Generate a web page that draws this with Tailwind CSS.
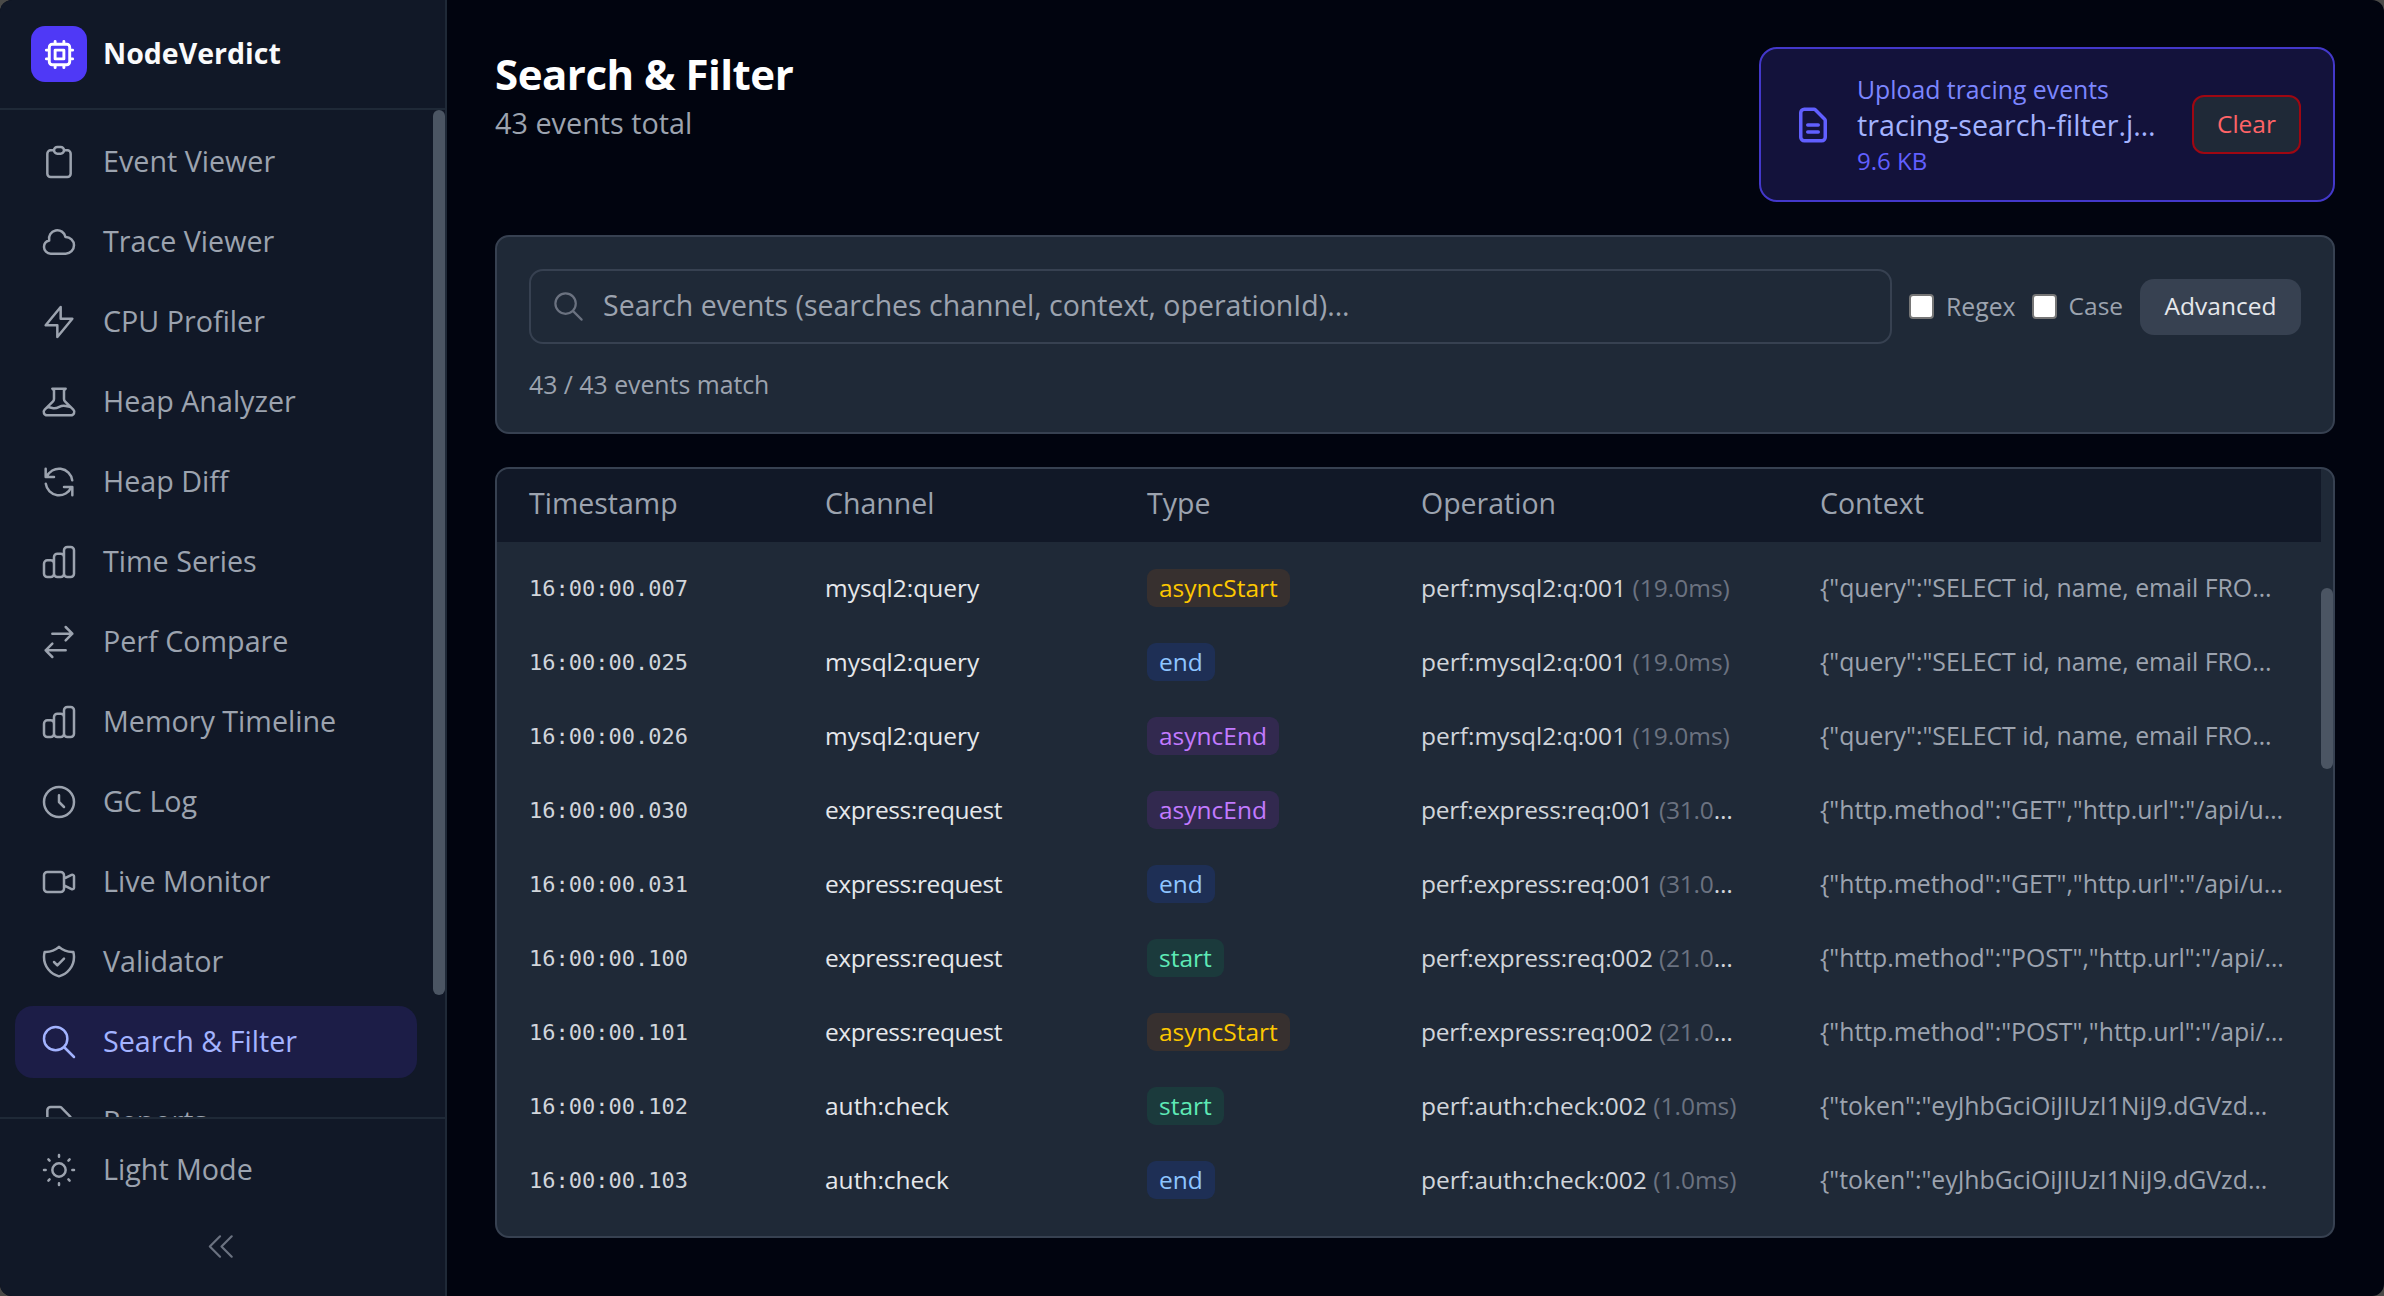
<!DOCTYPE html>
<html lang="en">
<head>
  <meta charset="UTF-8" />
  <meta name="viewport" content="width=device-width, initial-scale=1.0"/>
  <title>NodeVerdict - Search &amp; Filter</title>
  <script src="https://cdn.jsdelivr.net/npm/@tailwindcss/browser@4"></script>
</head>
<body class="bg-[#4a4a48] font-['Open_Sans',sans-serif] overflow-hidden">
  <div class="flex h-[1296px] w-[2384px] overflow-hidden rounded-[12px] bg-[#01040f]">

    <!-- Sidebar -->
    <aside class="flex h-full w-[447px] shrink-0 flex-col border-r-2 border-[#1f2937] bg-[#111827]">
      <div class="flex h-[110px] shrink-0 items-center gap-[16px] border-b-2 border-[#1f2937] pl-[31px]">
        <div class="flex h-[56px] w-[56px] items-center justify-center rounded-[14px] bg-[#4f39f6] text-white">
          <svg class="h-[35px] w-[35px]" fill="none" viewBox="0 0 24 24" stroke="currentColor" stroke-width="2"><path stroke-linecap="round" stroke-linejoin="round" d="M9 3v2m6-2v2M9 19v2m6-2v2M5 9H3m2 6H3m18-6h-2m2 6h-2M7 19h10a2 2 0 002-2V7a2 2 0 00-2-2H7a2 2 0 00-2 2v10a2 2 0 002 2zM9 9h6v6H9V9z"/></svg>
        </div>
        <span class="-mt-[2px] text-[28.5px] font-bold text-[#f9fafb]">NodeVerdict</span>
      </div>

      <nav class="relative min-h-0 flex-1 overflow-hidden pt-[16px]">
        <div class="ml-[15px] flex w-[402px] flex-col gap-[8px] text-[28.7px] text-[#9ca3af]">
          <a class="flex h-[72px] shrink-0 items-center gap-[24px] pl-[24px]">
            <svg class="h-[40px] w-[40px] shrink-0" fill="none" viewBox="0 0 24 24" stroke="currentColor" stroke-width="1.5"><path stroke-linecap="round" stroke-linejoin="round" d="M9 5H7a2 2 0 00-2 2v12a2 2 0 002 2h10a2 2 0 002-2V7a2 2 0 00-2-2h-2M9 5a2 2 0 002 2h2a2 2 0 002-2M9 5a2 2 0 012-2h2a2 2 0 012 2"/></svg>
            <span class="-mt-[2px]">Event Viewer</span>
          </a>
          <a class="flex h-[72px] shrink-0 items-center gap-[24px] pl-[24px]">
            <svg class="h-[40px] w-[40px] shrink-0" fill="none" viewBox="0 0 24 24" stroke="currentColor" stroke-width="1.5"><path stroke-linecap="round" stroke-linejoin="round" d="M3 15a4 4 0 004 4h9a5 5 0 10-.1-9.999 5.002 5.002 0 10-9.78 2.096A4.001 4.001 0 003 15z"/></svg>
            <span class="-mt-[2px]">Trace Viewer</span>
          </a>
          <a class="flex h-[72px] shrink-0 items-center gap-[24px] pl-[24px]">
            <svg class="h-[40px] w-[40px] shrink-0" fill="none" viewBox="0 0 24 24" stroke="currentColor" stroke-width="1.5"><path stroke-linecap="round" stroke-linejoin="round" d="M13 10V3L4 14h7v7l9-11h-7z"/></svg>
            <span class="-mt-[2px]">CPU Profiler</span>
          </a>
          <a class="flex h-[72px] shrink-0 items-center gap-[24px] pl-[24px]">
            <svg class="h-[40px] w-[40px] shrink-0" fill="none" viewBox="0 0 24 24" stroke="currentColor" stroke-width="1.5"><path stroke-linecap="round" stroke-linejoin="round" d="M19.428 15.428a2 2 0 00-1.022-.547l-2.387-.477a6 6 0 00-3.86.517l-.318.158a6 6 0 01-3.86.517L6.05 15.21a2 2 0 00-1.806.547M8 4h8l-1 1v5.172a2 2 0 00.586 1.414l5 5c1.26 1.26.367 3.414-1.415 3.414H4.828c-1.782 0-2.674-2.154-1.414-3.414l5-5A2 2 0 009 10.172V5L8 4z"/></svg>
            <span class="-mt-[2px]">Heap Analyzer</span>
          </a>
          <a class="flex h-[72px] shrink-0 items-center gap-[24px] pl-[24px]">
            <svg class="h-[40px] w-[40px] shrink-0" fill="none" viewBox="0 0 24 24" stroke="currentColor" stroke-width="1.5"><path stroke-linecap="round" stroke-linejoin="round" d="M4 4v5h.582m15.356 2A8.001 8.001 0 004.582 9m0 0H9m11 11v-5h-.581m0 0a8.003 8.003 0 01-15.357-2m15.357 2H15"/></svg>
            <span class="-mt-[2px]">Heap Diff</span>
          </a>
          <a class="flex h-[72px] shrink-0 items-center gap-[24px] pl-[24px]">
            <svg class="h-[40px] w-[40px] shrink-0" fill="none" viewBox="0 0 24 24" stroke="currentColor" stroke-width="1.5"><path stroke-linecap="round" stroke-linejoin="round" d="M9 19v-6a2 2 0 00-2-2H5a2 2 0 00-2 2v6a2 2 0 002 2h2a2 2 0 002-2zm0 0V9a2 2 0 012-2h2a2 2 0 012 2v10m-6 0a2 2 0 002 2h2a2 2 0 002-2m0 0V5a2 2 0 012-2h2a2 2 0 012 2v14a2 2 0 01-2 2h-2a2 2 0 01-2-2z"/></svg>
            <span class="-mt-[2px]">Time Series</span>
          </a>
          <a class="flex h-[72px] shrink-0 items-center gap-[24px] pl-[24px]">
            <svg class="h-[40px] w-[40px] shrink-0" fill="none" viewBox="0 0 24 24" stroke="currentColor" stroke-width="1.5"><path stroke-linecap="round" stroke-linejoin="round" d="M8 7h12m0 0l-4-4m4 4l-4 4m0 6H4m0 0l4 4m-4-4l4-4"/></svg>
            <span class="-mt-[2px]">Perf Compare</span>
          </a>
          <a class="flex h-[72px] shrink-0 items-center gap-[24px] pl-[24px]">
            <svg class="h-[40px] w-[40px] shrink-0" fill="none" viewBox="0 0 24 24" stroke="currentColor" stroke-width="1.5"><path stroke-linecap="round" stroke-linejoin="round" d="M9 19v-6a2 2 0 00-2-2H5a2 2 0 00-2 2v6a2 2 0 002 2h2a2 2 0 002-2zm0 0V9a2 2 0 012-2h2a2 2 0 012 2v10m-6 0a2 2 0 002 2h2a2 2 0 002-2m0 0V5a2 2 0 012-2h2a2 2 0 012 2v14a2 2 0 01-2 2h-2a2 2 0 01-2-2z"/></svg>
            <span class="-mt-[2px]">Memory Timeline</span>
          </a>
          <a class="flex h-[72px] shrink-0 items-center gap-[24px] pl-[24px]">
            <svg class="h-[40px] w-[40px] shrink-0" fill="none" viewBox="0 0 24 24" stroke="currentColor" stroke-width="1.5"><path stroke-linecap="round" stroke-linejoin="round" d="M12 8v4l3 3m6-3a9 9 0 11-18 0 9 9 0 0118 0z"/></svg>
            <span class="-mt-[2px]">GC Log</span>
          </a>
          <a class="flex h-[72px] shrink-0 items-center gap-[24px] pl-[24px]">
            <svg class="h-[40px] w-[40px] shrink-0" fill="none" viewBox="0 0 24 24" stroke="currentColor" stroke-width="1.5"><path stroke-linecap="round" stroke-linejoin="round" d="M15 10l4.553-2.276A1 1 0 0121 8.618v6.764a1 1 0 01-1.447.894L15 14M5 18h8a2 2 0 002-2V8a2 2 0 00-2-2H5a2 2 0 00-2 2v8a2 2 0 002 2z"/></svg>
            <span class="-mt-[2px]">Live Monitor</span>
          </a>
          <a class="flex h-[72px] shrink-0 items-center gap-[24px] pl-[24px]">
            <svg class="h-[40px] w-[40px] shrink-0" fill="none" viewBox="0 0 24 24" stroke="currentColor" stroke-width="1.5"><path stroke-linecap="round" stroke-linejoin="round" d="M9 12l2 2 4-4m5.618-4.016A11.955 11.955 0 0112 2.944a11.955 11.955 0 01-8.618 3.04A12.02 12.02 0 003 9c0 5.591 3.824 10.29 9 11.622 5.176-1.332 9-6.03 9-11.622 0-1.042-.133-2.052-.382-3.016z"/></svg>
            <span class="-mt-[2px]">Validator</span>
          </a>
          <a class="flex h-[72px] shrink-0 items-center gap-[24px] rounded-[18px] bg-[#1c1d47] pl-[24px] text-[#a3b3ff]">
            <svg class="h-[40px] w-[40px] shrink-0" fill="none" viewBox="0 0 24 24" stroke="currentColor" stroke-width="1.5"><path stroke-linecap="round" stroke-linejoin="round" d="M21 21l-6-6m2-5a7 7 0 11-14 0 7 7 0 0114 0z"/></svg>
            <span class="-mt-[2px]">Search &amp; Filter</span>
          </a>
          <a class="flex h-[72px] shrink-0 items-center gap-[24px] pl-[24px]">
            <svg class="h-[40px] w-[40px] shrink-0" fill="none" viewBox="0 0 24 24" stroke="currentColor" stroke-width="1.5"><path stroke-linecap="round" stroke-linejoin="round" d="M9 12h6m-6 4h6m2 5H7a2 2 0 01-2-2V5a2 2 0 012-2h5.586a1 1 0 01.707.293l5.414 5.414a1 1 0 01.293.707V19a2 2 0 01-2 2z"/></svg>
            <span class="-mt-[2px]">Reports</span>
          </a>
        </div>
        <!-- scrollbar thumb -->
        <div class="absolute right-0 top-0 h-[885px] w-[12px] rounded-full bg-[#4b5563]"></div>
      </nav>

      <div class="shrink-0 border-t-2 border-[#1f2937]">
        <div class="ml-[15px] mt-[15px] flex h-[72px] items-center gap-[24px] pl-[24px] text-[28.7px] text-[#9ca3af]">
          <svg class="h-[40px] w-[40px] shrink-0" fill="none" viewBox="0 0 24 24" stroke="currentColor" stroke-width="1.5"><path stroke-linecap="round" stroke-linejoin="round" d="M12 3v1m0 16v1m9-9h-1M4 12H3m15.364 6.364l-.707-.707M6.343 6.343l-.707-.707m12.728 0l-.707.707M6.343 17.657l-.707.707M16 12a4 4 0 11-8 0 4 4 0 018 0z"/></svg>
          <span class="-mt-[2px]">Light Mode</span>
        </div>
        <div class="flex h-[90px] items-start justify-center pr-[3px] pt-[23px] text-[#6b7280]">
          <svg class="h-[35px] w-[35px]" fill="none" viewBox="0 0 24 24" stroke="currentColor" stroke-width="1.5"><path stroke-linecap="round" stroke-linejoin="round" d="M11 19l-7-7 7-7m8 14l-7-7 7-7"/></svg>
        </div>
      </div>
    </aside>

    <!-- Main -->
    <main class="min-w-0 flex-1 pl-[48px] pr-[49px] pt-[47px]">
      <header class="flex h-[155px] items-start justify-between">
        <div>
          <h1 class="text-[42px] font-bold leading-[54px] tracking-[-0.5px] text-white">Search &amp; Filter</h1>
          <p class="text-[28.8px] leading-[43px] text-[#9ca3af]">43 events total</p>
        </div>
        <div class="flex h-[155px] w-[576px] items-center rounded-[18px] border-2 border-[#4338ca] bg-[#13123b] pl-[31px]">
          <svg class="h-[42px] w-[42px] shrink-0 text-[#615fff]" fill="none" viewBox="0 0 24 24" stroke="currentColor" stroke-width="2"><path stroke-linecap="round" stroke-linejoin="round" d="M9 12h6m-6 4h6m2 5H7a2 2 0 01-2-2V5a2 2 0 012-2h5.586a1 1 0 01.707.293l5.414 5.414a1 1 0 01.293.707V19a2 2 0 01-2 2z"/></svg>
          <div class="ml-[23px] w-[300px] shrink-0">
            <p class="text-[24.8px] leading-[33px] text-[#7c86ff]">Upload tracing events</p>
            <p class="truncate text-[28.7px] font-medium leading-[38px] text-[#a3b3ff]">tracing-search-filter.json</p>
            <p class="text-[24px] leading-[33px] text-[#615fff]">9.6 KB</p>
          </div>
          <button class="ml-[35px] h-[59px] w-[109px] rounded-[12px] border-2 border-[#9f0712] bg-[#1f2937] text-[24.5px] text-[#ff6467]">Clear</button>
        </div>
      </header>

      <!-- Search card -->
      <section class="mt-[33px] h-[199px] rounded-[14px] border-2 border-[#374151] bg-[#1f2937] px-[32px] pt-[32px]">
        <div class="flex items-center">
          <div class="flex h-[75px] w-[1363px] items-center rounded-[14px] border-2 border-[#374151] pl-[20px] text-[28.5px] text-[#9ca3af]">
            <svg class="h-[35px] w-[35px] shrink-0 text-[#6b7280]" fill="none" viewBox="0 0 24 24" stroke="currentColor" stroke-width="1.5"><path stroke-linecap="round" stroke-linejoin="round" d="M21 21l-6-6m2-5a7 7 0 11-14 0 7 7 0 0114 0z"/></svg>
            <span class="-mt-[2px] ml-[17px]">Search events (searches channel, context, operationId)...</span>
          </div>
          <label class="ml-[17px] flex items-center text-[24.8px] text-[#9ca3af]">
            <input type="checkbox" class="h-[25px] w-[25px] appearance-none rounded-[4px] border-2 border-[#767676] bg-white" />
            <span class="ml-[12px]">Regex</span>
          </label>
          <label class="ml-[16px] flex items-center text-[24.5px] text-[#9ca3af]">
            <input type="checkbox" class="h-[25px] w-[25px] appearance-none rounded-[4px] border-2 border-[#767676] bg-white" />
            <span class="ml-[12px]">Case</span>
          </label>
          <button class="ml-auto h-[56px] w-[161px] rounded-[14px] bg-[#374151] text-[24.5px] text-[#e5e7eb]">Advanced</button>
        </div>
        <p class="mt-[24px] text-[24.8px] leading-[33px] text-[#9ca3af]">43 / 43 events match</p>
      </section>

      <!-- Events table -->
      <section class="relative mt-[33px] h-[771px] overflow-hidden rounded-[14px] border-2 border-[#374151] bg-[#1f2937]">
        <div class="mr-[12px] grid h-[73px] grid-cols-[296px_322px_274px_399px_1fr] items-center bg-[#111827] pb-[4px] pl-[32px] text-[28.5px] text-[#9ca3af]">
          <div>Timestamp</div><div>Channel</div><div>Type</div><div>Operation</div><div>Context</div>
        </div>
        <div class="mr-[12px] mt-[9px] text-[24.5px]">
          <div class="grid h-[74px] grid-cols-[296px_322px_274px_399px_1fr] items-center pl-[32px]">
            <div class="font-['DejaVu_Sans_Mono',monospace] text-[22px] text-[#d1d5db]">16:00:00.007</div>
            <div class="text-[#e5e7eb]">mysql2:query</div>
            <div><span class="inline-block h-[38px] rounded-[9px] bg-[#37302f] px-[12px] leading-[38px] text-[#fdc700]">asyncStart</span></div>
            <div class="w-[320px] truncate text-[#d1d5db]">perf:mysql2:q:001 <span class="text-[#6b7280]">(19.0ms)</span></div>
            <div class="w-[466px] truncate text-[24.8px] text-[#9ca3af]">{"query":"SELECT id, name, email FROM users WHERE id = ?"}</div>
          </div>
          <div class="grid h-[74px] grid-cols-[296px_322px_274px_399px_1fr] items-center pl-[32px]">
            <div class="font-['DejaVu_Sans_Mono',monospace] text-[22px] text-[#d1d5db]">16:00:00.025</div>
            <div class="text-[#e5e7eb]">mysql2:query</div>
            <div><span class="inline-block h-[38px] rounded-[9px] bg-[#1e2f55] px-[12px] leading-[38px] text-[#8ec5ff]">end</span></div>
            <div class="w-[320px] truncate text-[#d1d5db]">perf:mysql2:q:001 <span class="text-[#6b7280]">(19.0ms)</span></div>
            <div class="w-[466px] truncate text-[24.8px] text-[#9ca3af]">{"query":"SELECT id, name, email FROM users WHERE id = ?"}</div>
          </div>
          <div class="grid h-[74px] grid-cols-[296px_322px_274px_399px_1fr] items-center pl-[32px]">
            <div class="font-['DejaVu_Sans_Mono',monospace] text-[22px] text-[#d1d5db]">16:00:00.026</div>
            <div class="text-[#e5e7eb]">mysql2:query</div>
            <div><span class="inline-block h-[38px] rounded-[9px] bg-[#32294f] px-[12px] leading-[38px] text-[#c27aff]">asyncEnd</span></div>
            <div class="w-[320px] truncate text-[#d1d5db]">perf:mysql2:q:001 <span class="text-[#6b7280]">(19.0ms)</span></div>
            <div class="w-[466px] truncate text-[24.8px] text-[#9ca3af]">{"query":"SELECT id, name, email FROM users WHERE id = ?"}</div>
          </div>
          <div class="grid h-[74px] grid-cols-[296px_322px_274px_399px_1fr] items-center pl-[32px]">
            <div class="font-['DejaVu_Sans_Mono',monospace] text-[22px] text-[#d1d5db]">16:00:00.030</div>
            <div class="tracking-[-0.4px] text-[#e5e7eb]">express:request</div>
            <div><span class="inline-block h-[38px] rounded-[9px] bg-[#32294f] px-[12px] leading-[38px] text-[#c27aff]">asyncEnd</span></div>
            <div class="w-[318px] truncate tracking-[-0.2px] text-[#d1d5db]">perf:express:req:001 <span class="text-[#6b7280]">(31.0ms)</span></div>
            <div class="w-[466px] truncate text-[24.8px] text-[#9ca3af]">{"http.method":"GET","http.url":"/api/users/42"}</div>
          </div>
          <div class="grid h-[74px] grid-cols-[296px_322px_274px_399px_1fr] items-center pl-[32px]">
            <div class="font-['DejaVu_Sans_Mono',monospace] text-[22px] text-[#d1d5db]">16:00:00.031</div>
            <div class="tracking-[-0.4px] text-[#e5e7eb]">express:request</div>
            <div><span class="inline-block h-[38px] rounded-[9px] bg-[#1e2f55] px-[12px] leading-[38px] text-[#8ec5ff]">end</span></div>
            <div class="w-[318px] truncate tracking-[-0.2px] text-[#d1d5db]">perf:express:req:001 <span class="text-[#6b7280]">(31.0ms)</span></div>
            <div class="w-[466px] truncate text-[24.8px] text-[#9ca3af]">{"http.method":"GET","http.url":"/api/users/42"}</div>
          </div>
          <div class="grid h-[74px] grid-cols-[296px_322px_274px_399px_1fr] items-center pl-[32px]">
            <div class="font-['DejaVu_Sans_Mono',monospace] text-[22px] text-[#d1d5db]">16:00:00.100</div>
            <div class="tracking-[-0.4px] text-[#e5e7eb]">express:request</div>
            <div><span class="inline-block h-[38px] rounded-[9px] bg-[#1b3a3c] px-[12px] leading-[38px] text-[#5ee9b5]">start</span></div>
            <div class="w-[318px] truncate tracking-[-0.2px] text-[#d1d5db]">perf:express:req:002 <span class="text-[#6b7280]">(21.0ms)</span></div>
            <div class="w-[466px] truncate text-[24.8px] text-[#9ca3af]">{"http.method":"POST","http.url":"/api/orders"}</div>
          </div>
          <div class="grid h-[74px] grid-cols-[296px_322px_274px_399px_1fr] items-center pl-[32px]">
            <div class="font-['DejaVu_Sans_Mono',monospace] text-[22px] text-[#d1d5db]">16:00:00.101</div>
            <div class="tracking-[-0.4px] text-[#e5e7eb]">express:request</div>
            <div><span class="inline-block h-[38px] rounded-[9px] bg-[#37302f] px-[12px] leading-[38px] text-[#fdc700]">asyncStart</span></div>
            <div class="w-[318px] truncate tracking-[-0.2px] text-[#d1d5db]">perf:express:req:002 <span class="text-[#6b7280]">(21.0ms)</span></div>
            <div class="w-[466px] truncate text-[24.8px] text-[#9ca3af]">{"http.method":"POST","http.url":"/api/orders"}</div>
          </div>
          <div class="grid h-[74px] grid-cols-[296px_322px_274px_399px_1fr] items-center pl-[32px]">
            <div class="font-['DejaVu_Sans_Mono',monospace] text-[22px] text-[#d1d5db]">16:00:00.102</div>
            <div class="text-[#e5e7eb]">auth:check</div>
            <div><span class="inline-block h-[38px] rounded-[9px] bg-[#1b3a3c] px-[12px] leading-[38px] text-[#5ee9b5]">start</span></div>
            <div class="w-[330px] truncate text-[#d1d5db]">perf:auth:check:002 <span class="text-[#6b7280]">(1.0ms)</span></div>
            <div class="w-[458px] truncate text-[24.8px] text-[#9ca3af]">{"token":"eyJhbGciOiJIUzI1NiJ9.dGVzdC1wYXlsb2Fk"}</div>
          </div>
          <div class="grid h-[74px] grid-cols-[296px_322px_274px_399px_1fr] items-center pl-[32px]">
            <div class="font-['DejaVu_Sans_Mono',monospace] text-[22px] text-[#d1d5db]">16:00:00.103</div>
            <div class="text-[#e5e7eb]">auth:check</div>
            <div><span class="inline-block h-[38px] rounded-[9px] bg-[#1e2f55] px-[12px] leading-[38px] text-[#8ec5ff]">end</span></div>
            <div class="w-[330px] truncate text-[#d1d5db]">perf:auth:check:002 <span class="text-[#6b7280]">(1.0ms)</span></div>
            <div class="w-[458px] truncate text-[24.8px] text-[#9ca3af]">{"token":"eyJhbGciOiJIUzI1NiJ9.dGVzdC1wYXlsb2Fk"}</div>
          </div>
        </div>
        <!-- scrollbar thumb -->
        <div class="absolute right-0 top-[119px] h-[181px] w-[12px] rounded-full bg-[#4b5563]"></div>
      </section>
    </main>
  </div>
</body>
</html>
